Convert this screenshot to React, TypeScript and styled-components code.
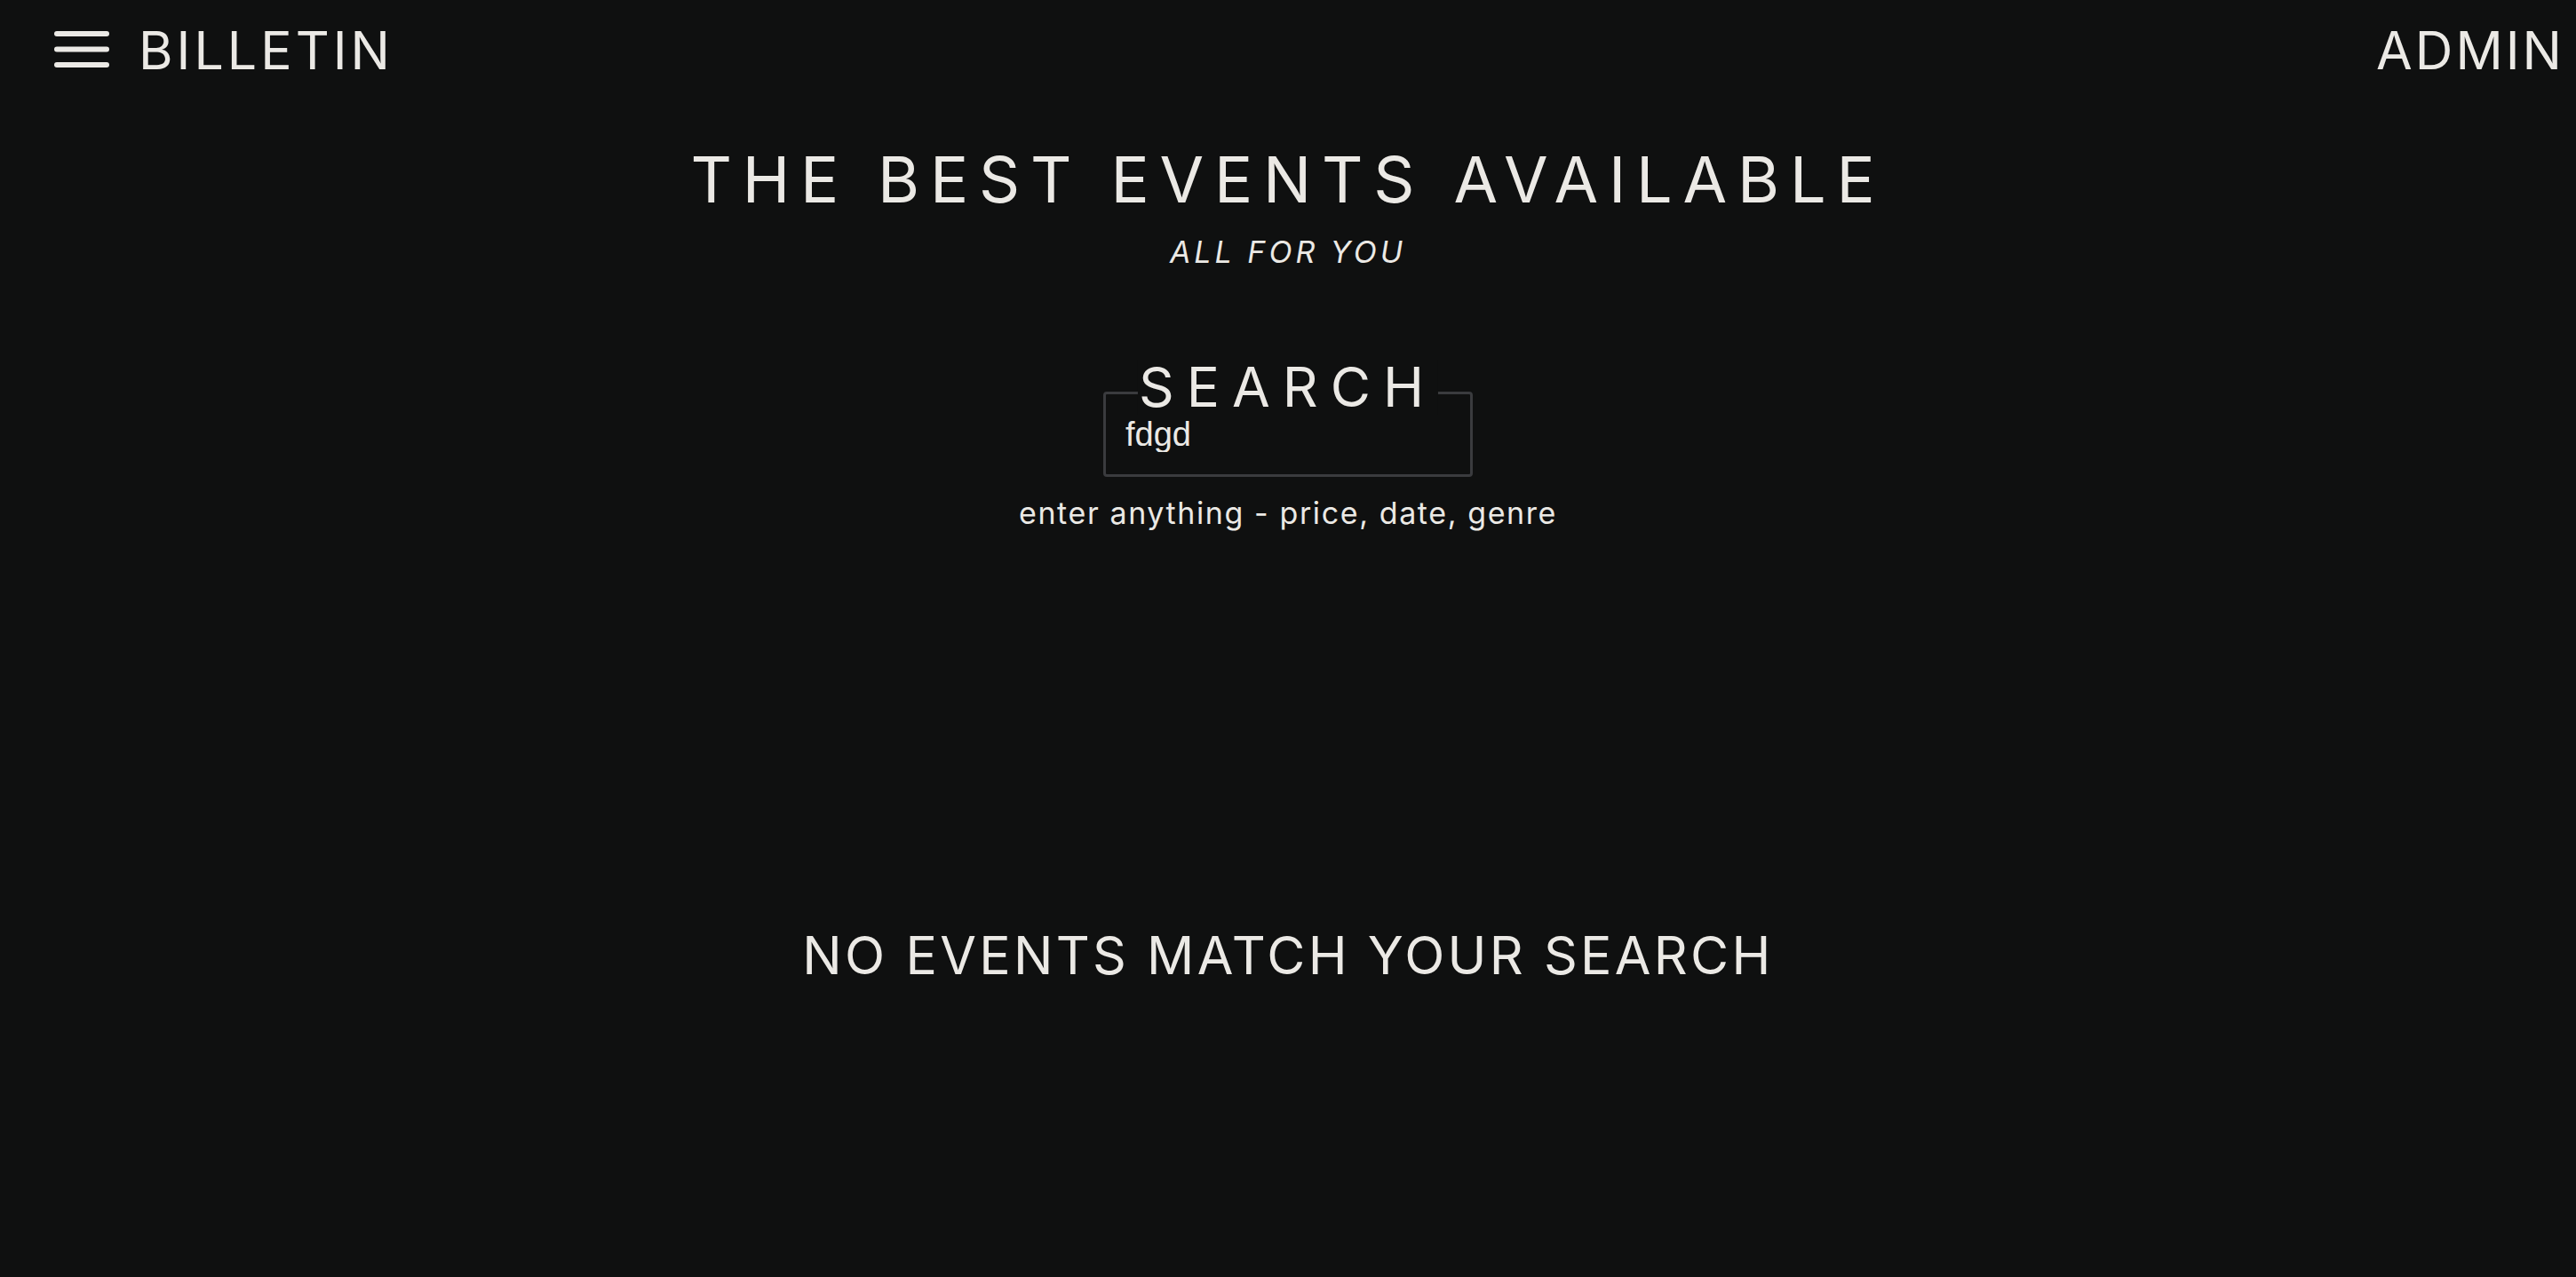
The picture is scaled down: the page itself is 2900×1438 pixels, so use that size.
import React from "react";
import styled, { createGlobalStyle } from "styled-components";

const GlobalStyle = createGlobalStyle`
  html, body {
    margin: 0;
    padding: 0;
    background: #0f1010;
  }
  body {
    font-family: Inter, "Noto Sans", sans-serif;
    color: #ebe9e5;
  }
  * { box-sizing: border-box; }
`;

const Page = styled.div`
  min-height: 100vh;
  display: flex;
  flex-direction: column;
  background: #0f1010;
`;

const Header = styled.header`
  display: flex;
  align-items: center;
  justify-content: space-between;
  height: 112px;
  padding: 0 13px 0 61px;
`;

const Brand = styled.div`
  display: flex;
  align-items: center;
  gap: 33px;
`;

const MenuButton = styled.button`
  display: flex;
  padding: 0;
  border: 0;
  background: none;
  color: inherit;
  cursor: pointer;
`;

const NavText = styled.a<{ $spacing: number }>`
  font-size: 59px;
  line-height: 1;
  font-weight: 400;
  letter-spacing: ${(p) => p.$spacing}px;
  color: inherit;
  text-decoration: none;
`;

const Hero = styled.section`
  display: flex;
  flex-direction: column;
  align-items: center;
  margin-top: 54px;
`;

const Title = styled.h1`
  margin: 0;
  font-size: 72px;
  line-height: 1;
  font-weight: 400;
  letter-spacing: 11.8px;
`;

const Subtitle = styled.h2`
  margin: 29px 0 0;
  font-size: 34px;
  line-height: 1;
  font-weight: 400;
  font-style: italic;
  letter-spacing: 4px;
`;

const SearchSection = styled.section`
  display: flex;
  flex-direction: column;
  align-items: center;
  margin-top: 140px;
`;

const SearchBox = styled.div`
  position: relative;
  width: 416px;
  border: 3px solid #3a3b3e;
  border-radius: 4px;
  padding: 25px 0;
`;

const SearchLabel = styled.label`
  position: absolute;
  top: -39.5px;
  left: 50%;
  transform: translateX(-50%);
  background: #0f1010;
  font-size: 62px;
  line-height: 1;
  font-weight: 400;
  letter-spacing: 14px;
  padding: 0 2px 0 1px;
  white-space: nowrap;
`;

const SearchInput = styled.input`
  display: block;
  width: 100%;
  height: 40px;
  padding: 0 22px;
  border: 0;
  outline: none;
  background: transparent;
  color: #ebe9e5;
  font-family: "Liberation Sans", Arial, sans-serif;
  font-size: 38px;
`;

const Hint = styled.p`
  margin: 24px 0 0;
  font-size: 34px;
  line-height: 1;
  letter-spacing: 1.6px;
`;

const Results = styled.section`
  display: flex;
  justify-content: center;
  margin-top: 451px;
`;

const EmptyMessage = styled.h3`
  margin: 0;
  font-size: 59px;
  line-height: 1;
  font-weight: 400;
  letter-spacing: 3.3px;
`;

const MenuIcon = () => (
  <svg width="62" height="42" viewBox="0 0 62 42" fill="none">
    <g stroke="#ebe9e5" strokeWidth="6" strokeLinecap="round">
      <line x1="3" y1="3" x2="59" y2="3" />
      <line x1="3" y1="20.5" x2="59" y2="20.5" />
      <line x1="3" y1="38" x2="59" y2="38" />
    </g>
  </svg>
);

export default function App() {
  return (
    <>
      <GlobalStyle />
      <Page>
        <Header>
          <Brand>
            <MenuButton aria-label="menu">
              <MenuIcon />
            </MenuButton>
            <NavText href="#" $spacing={4}>BILLETIN</NavText>
          </Brand>
          <NavText href="#" $spacing={3}>ADMIN</NavText>
        </Header>
        <Hero>
          <Title>THE BEST EVENTS AVAILABLE</Title>
          <Subtitle>ALL FOR YOU</Subtitle>
        </Hero>
        <SearchSection>
          <SearchBox>
            <SearchLabel htmlFor="search">SEARCH</SearchLabel>
            <SearchInput id="search" defaultValue="fdgd" />
          </SearchBox>
          <Hint>enter anything - price, date, genre</Hint>
        </SearchSection>
        <Results>
          <EmptyMessage>NO EVENTS MATCH YOUR SEARCH</EmptyMessage>
        </Results>
      </Page>
    </>
  );
}
